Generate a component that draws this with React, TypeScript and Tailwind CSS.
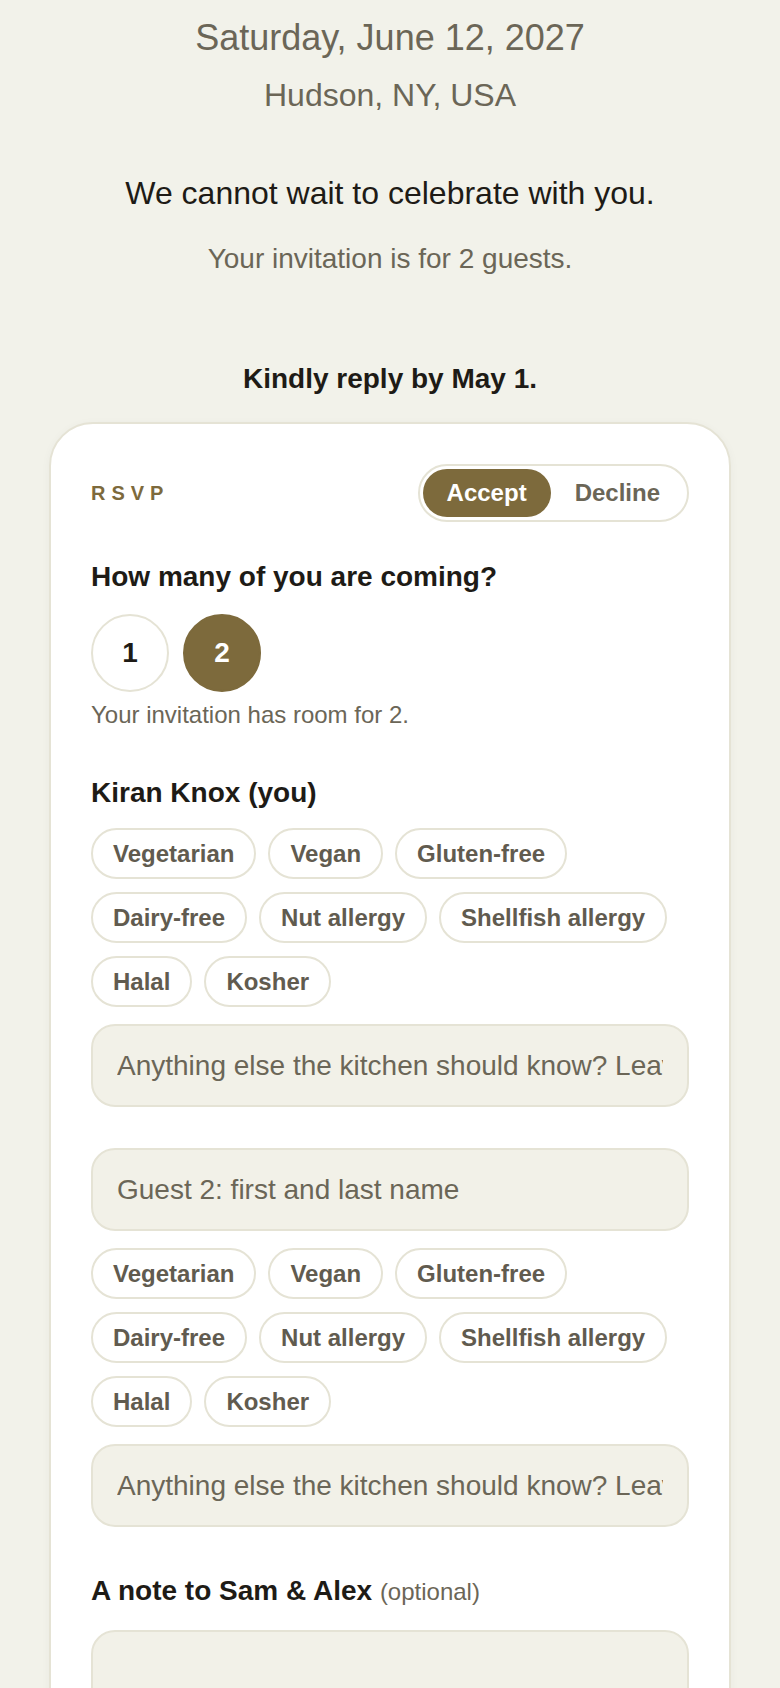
import { useState } from "react";

const DIETS = ["Vegetarian", "Vegan", "Gluten-free", "Dairy-free", "Nut allergy", "Shellfish allergy", "Halal", "Kosher"];

function DietChips({ className }: { className: string }) {
  const [picked, setPicked] = useState<string[]>([]);
  return (
    <div className={"flex flex-wrap gap-x-3 gap-y-[13px] " + className}>
      {DIETS.map((d) => {
        const on = picked.includes(d);
        return (
          <button
            key={d}
            type="button"
            onClick={() => setPicked(on ? picked.filter((p) => p !== d) : [...picked, d])}
            className={
              on
                ? "flex h-[51px] items-center rounded-full border-2 border-[#7d6a3c] bg-[#7d6a3c] px-5 text-[24px] font-bold text-white"
                : "flex h-[51px] items-center rounded-full border-2 border-[#e5e3d5] bg-white px-5 text-[24px] font-bold text-[#615b4f]"
            }
          >
            {d}
          </button>
        );
      })}
    </div>
  );
}

function TextField({ placeholder, className }: { placeholder: string; className?: string }) {
  return (
    <input
      type="text"
      placeholder={placeholder}
      className={
        "block h-[83px] w-full rounded-[24px] border-2 border-[#e5e3d5] bg-[#f2f1e8] px-6 text-[28px] text-[#1e1b16] outline-none placeholder:text-[#6b6657] " +
        (className ?? "")
      }
    />
  );
}

export default function App() {
  const [accept, setAccept] = useState(true);
  const [count, setCount] = useState(2);

  return (
    <div className="min-h-screen bg-[#f2f2ea] px-[49px] pt-[17px] text-center font-['Liberation_Sans',Arial,sans-serif]">
      <p className="text-[36px] leading-[41px] text-[#6b6657]">Saturday, June 12, 2027</p>
      <p className="mt-[19px] text-[32px] leading-[37px] text-[#6b6657]">Hudson, NY, USA</p>
      <p className="mt-[61px] text-[32px] leading-[37px] text-[#1e1b16]">We cannot wait to celebrate with you.</p>
      <p className="mt-[31px] text-[28px] leading-[32px] text-[#6b6657]">Your invitation is for 2 guests.</p>
      <p className="mt-[88px] text-[28px] font-bold leading-[32px] text-[#1e1b16]">Kindly reply by May 1.</p>

      <div className="mt-[27px] rounded-[44px] border-2 border-[#e5e3d5] bg-white p-10 text-left shadow-[0_2px_10px_rgba(60,50,20,0.04)]">
        {/* header */}
        <div className="flex items-center justify-between">
          <span className="text-[20px] font-bold tracking-[0.3em] text-[#7d6a3c]">RSVP</span>
          <div className="flex rounded-full border-2 border-[#e5e3d5] bg-white p-[3px]">
            <button
              type="button"
              onClick={() => setAccept(true)}
              className={
                accept
                  ? "h-12 rounded-full bg-[#7d6a3c] px-6 text-[24px] font-bold text-white"
                  : "h-12 rounded-full px-6 text-[24px] font-bold text-[#6b6657]"
              }
            >
              Accept
            </button>
            <button
              type="button"
              onClick={() => setAccept(false)}
              className={
                !accept
                  ? "h-12 rounded-full bg-[#7d6a3c] px-6 text-[24px] font-bold text-white"
                  : "h-12 rounded-full px-6 text-[24px] font-bold text-[#6b6657]"
              }
            >
              Decline
            </button>
          </div>
        </div>

        <h2 className="mt-[39px] text-[28px] font-bold leading-[32px] text-[#1e1b16]">How many of you are coming?</h2>
        <div className="mt-[21px] flex gap-[14px]">
          {[1, 2].map((n) => (
            <button
              key={n}
              type="button"
              onClick={() => setCount(n)}
              className={
                count === n
                  ? "flex h-[78px] w-[78px] items-center justify-center rounded-full border-2 border-[#7d6a3c] bg-[#7d6a3c] text-[28px] font-bold text-white"
                  : "flex h-[78px] w-[78px] items-center justify-center rounded-full border-2 border-[#e5e3d5] bg-white text-[28px] font-bold text-[#1e1b16]"
              }
            >
              {n}
            </button>
          ))}
        </div>
        <p className="mt-[9px] text-[24px] leading-[28px] text-[#6b6657]">Your invitation has room for 2.</p>

        {/* guest 1 */}
        <h3 className="mt-[48px] text-[28px] font-bold leading-[32px] text-[#1e1b16]">Kiran Knox (you)</h3>
        <DietChips className="mt-[19px]" />
        <TextField className="mt-[17px]" placeholder="Anything else the kitchen should know? Leave it here." />

        {/* guest 2 */}
        {count > 1 && (
          <div className="mt-[41px]">
            <TextField placeholder="Guest 2: first and last name" />
            <DietChips className="mt-[17px]" />
            <TextField className="mt-[17px]" placeholder="Anything else the kitchen should know? Leave it here." />
          </div>
        )}

        <h3 className="mt-[48px] text-[28px] leading-[32px] text-[#1e1b16]">
          <span className="font-bold">A note to Sam &amp; Alex</span>{" "}
          <span className="text-[24px] text-[#6b6657]">(optional)</span>
        </h3>
        <textarea
          rows={4}
          className="mt-[22px] block h-[180px] w-full resize-none rounded-[24px] border-2 border-[#e5e3d5] bg-[#f2f1e8] px-6 py-6 text-[28px] text-[#1e1b16] outline-none"
        />
      </div>
    </div>
  );
}
